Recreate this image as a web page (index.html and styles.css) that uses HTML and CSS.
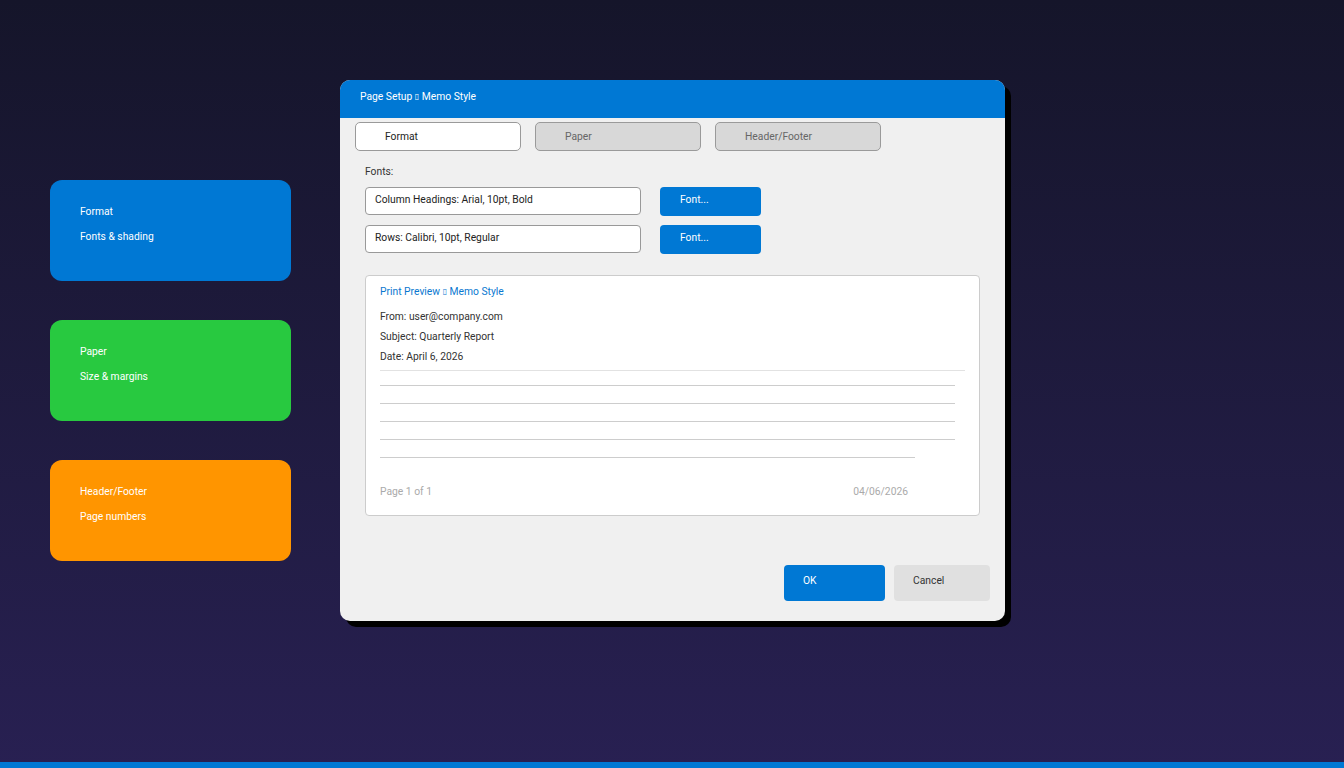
FILE: index.html
```html
<!DOCTYPE html>
<html>
<head>
<meta charset="utf-8">
<link rel="stylesheet" href="styles.css">
</head>
<body>
<div class="page">
  <div class="main">
    <div class="cards">
      <div class="card card-blue"><div>Format</div><div>Fonts &amp; shading</div></div>
      <div class="card card-green"><div>Paper</div><div>Size &amp; margins</div></div>
      <div class="card card-orange"><div>Header/Footer</div><div>Page numbers</div></div>
    </div>
    <div class="dialog">
      <div class="titlebar">Page Setup <span class="tofu">▯</span> Memo Style</div>
      <div class="tabs">
        <div class="tab active">Format</div>
        <div class="tab">Paper</div>
        <div class="tab">Header/Footer</div>
      </div>
      <div class="content">
        <div class="label">Fonts:</div>
        <div class="font-row">
          <div class="field">Column Headings: Arial, 10pt, Bold</div>
          <div class="btn btn-font">Font...</div>
        </div>
        <div class="font-row">
          <div class="field">Rows: Calibri, 10pt, Regular</div>
          <div class="btn btn-font">Font...</div>
        </div>
        <div class="preview">
          <div class="preview-title">Print Preview <span class="tofu">▯</span> Memo Style</div>
          <div class="memo-line">From: user@company.com</div>
          <div class="memo-line">Subject: Quarterly Report</div>
          <div class="memo-line">Date: April 6, 2026</div>
          <div class="sep"></div>
          <div class="rule"></div>
          <div class="rule"></div>
          <div class="rule"></div>
          <div class="rule"></div>
          <div class="rule short"></div>
          <div class="preview-foot"><span>Page 1 of 1</span><span>04/06/2026</span></div>
        </div>
      </div>
      <div class="actions">
        <div class="btn btn-ok">OK</div>
        <div class="btn btn-cancel">Cancel</div>
      </div>
    </div>
  </div>
  <div class="bottom-bar"></div>
</div>
</body>
</html>
```

FILE: styles.css
```css
html, body {
  margin: 0;
  padding: 0;
}
body {
  font-family: Roboto, "Liberation Sans", sans-serif;
  font-size: 10.3px;
  background: linear-gradient(180deg, #15152a 0%, #282052 100%);
  width: 1344px;
  height: 768px;
  overflow: hidden;
}
.page {
  height: 768px;
  display: flex;
  flex-direction: column;
}
.main {
  flex: 1;
  display: flex;
  align-items: flex-start;
  padding: 80px 0 0 50px;
}
.cards {
  margin-top: 100px;
  width: 241px;
  display: flex;
  flex-direction: column;
  gap: 39px;
}
.card {
  height: 101px;
  border-radius: 12px;
  color: #fff;
  box-sizing: border-box;
  padding: 25px 30px 0;
  display: flex;
  flex-direction: column;
  gap: 11px;
  line-height: 14px;
}
.card-blue { background: #0078d4; }
.card-green { background: #28c940; }
.card-orange { background: #ff9500; }

.dialog {
  margin-left: 49px;
  width: 665px;
  height: 541px;
  background: #f0f0f0;
  border-radius: 10px;
  box-shadow: 6px 6px 0 #000;
  overflow: hidden;
  display: flex;
  flex-direction: column;
}
.titlebar {
  height: 38px;
  background: #0078d4;
  color: #fff;
  padding-left: 20px;
  line-height: 33px;
  flex: none;
}
.tofu {
  font-family: "DejaVu Sans", sans-serif;
  font-size: 8px;
  vertical-align: 1px;
}
.tabs {
  display: flex;
  gap: 14px;
  padding: 4px 0 0 15px;
}
.tab {
  width: 166px;
  height: 29px;
  box-sizing: border-box;
  border: 1px solid #9a9a9a;
  border-radius: 5px;
  background: #d8d8d8;
  color: #666;
  padding-left: 29px;
  line-height: 27px;
}
.tab.active {
  background: #fff;
  color: #222;
}
.content {
  padding: 0 25px;
}
.label {
  color: #333;
  margin-top: 15px;
  line-height: 12px;
  height: 21px;
}
.font-row {
  display: flex;
  gap: 19px;
  margin-bottom: 9px;
  align-items: flex-start;
}
.field {
  width: 276px;
  height: 28px;
  box-sizing: border-box;
  border: 1px solid #999;
  border-radius: 4px;
  background: #fff;
  color: #222;
  padding-left: 9px;
  line-height: 23px;
}
.btn {
  box-sizing: border-box;
  border-radius: 4px;
}
.btn-font {
  width: 101px;
  height: 29px;
  background: #0078d4;
  color: #fff;
  padding-left: 20px;
  line-height: 25px;
}
.preview {
  margin-top: 21px;
  width: 615px;
  height: 241px;
  box-sizing: border-box;
  border: 1px solid #ccc;
  border-radius: 4px;
  background: #fff;
  padding: 9px 14px 0;
}
.preview-title {
  color: #0a78d0;
  line-height: 14px;
  margin-bottom: 11px;
}
.memo-line {
  color: #333;
  line-height: 14px;
  margin-bottom: 6px;
}
.sep {
  height: 1px;
  background: #e2e2e2;
  margin-top: 1px;
  width: 585px;
}
.rule {
  height: 1px;
  background: #cdcdcd;
  width: 575px;
  margin-top: 14px;
}
.rule + .rule { margin-top: 17px; }
.rule.short { width: 535px; }
.preview-foot {
  display: flex;
  justify-content: space-between;
  width: 528px;
  color: #aaa;
  margin-top: 27px;
  line-height: 14px;
}
.actions {
  margin-top: auto;
  display: flex;
  justify-content: flex-end;
  gap: 9px;
  padding: 0 15px 20px 0;
}
.btn-ok {
  width: 101px;
  height: 36px;
  background: #0078d4;
  color: #fff;
  padding-left: 19px;
  line-height: 31px;
}
.btn-cancel {
  width: 96px;
  height: 36px;
  background: #e0e0e0;
  color: #333;
  padding-left: 19px;
  line-height: 31px;
}
.bottom-bar {
  height: 6px;
  background: #0078d4;
  flex: none;
}
```
